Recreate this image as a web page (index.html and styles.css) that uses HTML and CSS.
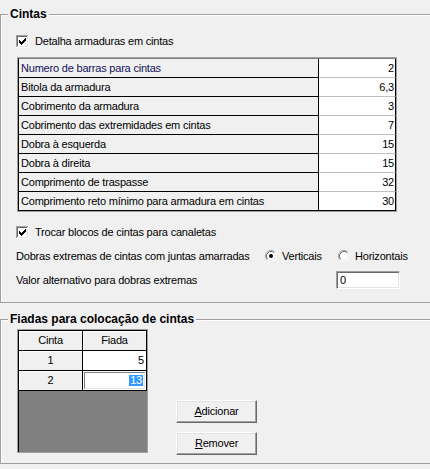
FILE: index.html
```html
<!DOCTYPE html>
<html lang="pt">
<head>
<meta charset="utf-8">
<title>Cintas</title>
<link rel="stylesheet" href="styles.css">
</head>
<body>
<div class="window">
  <fieldset class="group group-cintas">
    <legend>Cintas</legend>
    <div class="group-body cintas-body">
      <label class="check check-1">
        <svg class="cb" width="13" height="13" viewBox="0 0 13 13" shape-rendering="crispEdges">
          <rect x="0" y="0" width="13" height="13" fill="#fff"/>
          <path d="M0 0h12v1H1v11H0z" fill="#a0a0a0"/>
          <path d="M1 1h10v1H2v9H1z" fill="#696969"/>
          <path d="M12 0h1v13H0v-1h12z" fill="#fff"/>
          <path d="M11 1h1v11H1v-1h10z" fill="#e3e3e3"/>
          <path d="M3 5h1v3H3z M4 6h1v3H4z M5 7h1v3H5z M6 6h1v3H6z M7 5h1v3H7z M8 4h1v3H8z M9 3h1v3H9z" fill="#000"/>
        </svg>
        <span>Detalha armaduras em cintas</span>
      </label>

      <div class="grid">
        <div class="grid-inner">
          <div class="cell lbl first">Numero de barras para cintas</div><div class="cell val">2</div>
          <div class="cell lbl">Bitola da armadura</div><div class="cell val">6,3</div>
          <div class="cell lbl">Cobrimento da armadura</div><div class="cell val">3</div>
          <div class="cell lbl">Cobrimento das extremidades em cintas</div><div class="cell val">7</div>
          <div class="cell lbl">Dobra à esquerda</div><div class="cell val">15</div>
          <div class="cell lbl">Dobra à direita</div><div class="cell val">15</div>
          <div class="cell lbl">Comprimento de traspasse</div><div class="cell val">32</div>
          <div class="cell lbl">Comprimento reto mínimo para armadura em cintas</div><div class="cell val last">30</div>
        </div>
      </div>

      <label class="check check-2">
        <svg class="cb" width="13" height="13" viewBox="0 0 13 13" shape-rendering="crispEdges">
          <rect x="0" y="0" width="13" height="13" fill="#fff"/>
          <path d="M0 0h12v1H1v11H0z" fill="#a0a0a0"/>
          <path d="M1 1h10v1H2v9H1z" fill="#696969"/>
          <path d="M12 0h1v13H0v-1h12z" fill="#fff"/>
          <path d="M11 1h1v11H1v-1h10z" fill="#e3e3e3"/>
          <path d="M3 5h1v3H3z M4 6h1v3H4z M5 7h1v3H5z M6 6h1v3H6z M7 5h1v3H7z M8 4h1v3H8z M9 3h1v3H9z" fill="#000"/>
        </svg>
        <span>Trocar blocos de cintas para canaletas</span>
      </label>

      <div class="row row-dobras">
        <span class="row-label dobras-label">Dobras extremas de cintas com juntas amarradas</span>
        <span class="radio-opt">
          <svg class="rb" width="12" height="12" viewBox="0 0 12 12">
            <circle cx="6" cy="6" r="5.5" fill="#fff"/>
            <path d="M2.11 9.89A5.5 5.5 0 0 1 9.89 2.11" fill="none" stroke="#a0a0a0" stroke-width="1"/>
            <path d="M9.89 2.11A5.5 5.5 0 0 1 2.11 9.89" fill="none" stroke="#fff" stroke-width="1"/>
            <path d="M2.82 9.18A4.5 4.5 0 0 1 9.18 2.82" fill="none" stroke="#696969" stroke-width="1"/>
            <path d="M9.18 2.82A4.5 4.5 0 0 1 2.82 9.18" fill="none" stroke="#e3e3e3" stroke-width="1"/>
            <circle cx="6" cy="6" r="2" fill="#000"/>
          </svg>
          <span>Verticais</span>
        </span>
        <span class="radio-opt">
          <svg class="rb" width="12" height="12" viewBox="0 0 12 12">
            <circle cx="6" cy="6" r="5.5" fill="#fff"/>
            <path d="M2.11 9.89A5.5 5.5 0 0 1 9.89 2.11" fill="none" stroke="#a0a0a0" stroke-width="1"/>
            <path d="M9.89 2.11A5.5 5.5 0 0 1 2.11 9.89" fill="none" stroke="#fff" stroke-width="1"/>
            <path d="M2.82 9.18A4.5 4.5 0 0 1 9.18 2.82" fill="none" stroke="#696969" stroke-width="1"/>
            <path d="M9.18 2.82A4.5 4.5 0 0 1 2.82 9.18" fill="none" stroke="#e3e3e3" stroke-width="1"/>
          </svg>
          <span>Horizontais</span>
        </span>
      </div>

      <div class="row row-valor">
        <span class="row-label valor-label">Valor alternativo para dobras extremas</span>
        <div class="edit">0</div>
      </div>
    </div>
  </fieldset>

  <fieldset class="group group-fiadas">
    <legend>Fiadas para colocação de cintas</legend>
    <div class="group-body fiadas-body">
      <div class="sgrid">
        <div class="sgrid-inner">
          <div class="fx">Cinta</div><div class="fx">Fiada</div>
          <div class="fx">1</div><div class="dc">5</div>
          <div class="fx">2</div><div class="dc edit-cell"><span class="inplace"><span class="sel">13</span></span></div>
        </div>
      </div>
      <div class="buttons">
        <button class="btn" type="button"><u>A</u>dicionar</button>
        <button class="btn" type="button"><u>R</u>emover</button>
      </div>
    </div>
  </fieldset>
</div>
</body>
</html>
```

FILE: styles.css
```css
* { box-sizing: border-box; }

html, body {
  margin: 0;
  padding: 0;
}

body {
  width: 430px;
  height: 469px;
  overflow: hidden;
  background: #f0f0f0;
  color: #000;
  font-family: "Liberation Sans", Arial, sans-serif;
  font-size: 11px;
  letter-spacing: -0.2px;
}

.window {
  width: 430px;
}

/* Group boxes */
.group {
  width: 440px;
  min-width: 0;
  margin: 0;
  padding: 0;
  border: 1px solid #a0a0a0;
  box-shadow: inset 1px 1px 0 #fff;
}

.group legend {
  margin-left: 7px;
  padding: 0 2px;
  height: 15px;
  font-size: 12px;
  font-weight: bold;
  line-height: 15px;
  letter-spacing: 0;
  background: #f0f0f0;
}

.group-cintas { margin-top: 7px; }
.group-fiadas { margin-top: 9px; }

.cintas-body {
  display: flex;
  flex-direction: column;
  align-items: flex-start;
  padding: 0 0 13px 15px;
}

/* Checkbox rows */
.check {
  display: flex;
  align-items: center;
  gap: 6px;
  height: 17px;
  line-height: 17px;
  white-space: nowrap;
}
.check-1 { margin-top: 11px; }
.check-2 { margin-top: 12px; }
.cb { display: block; flex: none; }

/* Properties grid */
.grid {
  margin-top: 7px;
  margin-left: 1px;
  width: 380px;
  border: 1px solid #a0a0a0;
}

.grid-inner {
  display: grid;
  grid-template-columns: 300px 77px;
  border-top: 1px solid #808080;
  border-left: 1px solid #000;
}

.cell {
  height: 19px;
  line-height: 18px;
  white-space: nowrap;
  overflow: hidden;
}

.lbl {
  background: #f0f0f0;
  padding-left: 2px;
  border-right: 1px solid #000;
  border-bottom: 1px solid #000;
}
.lbl.first { color: #10105a; }

.val {
  background: #fff;
  text-align: right;
  padding-right: 1px;
  border-right: 1px solid #000;
  border-bottom: 1px solid #c0c0c0;
}
.val.last { border-bottom-color: #000; }

/* Plain rows */
.row {
  display: flex;
  align-items: center;
  white-space: nowrap;
}
.row-dobras { margin-top: 6px; height: 17px; }
.row-valor { margin-top: 7px; height: 18px; }

.dobras-label { width: 249px; flex: none; }
.valor-label { width: 320px; flex: none; }

.radio-opt {
  display: flex;
  align-items: center;
  gap: 5px;
  width: 73px;
  flex: none;
}
.rb { display: block; flex: none; margin-top: 1px; }

.edit {
  width: 64px;
  height: 18px;
  line-height: 14px;
  background: #fff;
  border-style: solid;
  border-width: 1px;
  border-color: #a0a0a0 #fff #fff #a0a0a0;
  box-shadow: inset 1px 1px 0 #696969, inset -1px -1px 0 #e3e3e3;
  padding-top: 1px;
  padding-left: 3px;
}

/* Fiadas group */
.fiadas-body {
  display: flex;
  align-items: flex-start;
  padding: 2px 0 8px 16px;
}

.sgrid {
  width: 131px;
  height: 124px;
  border: 1px solid #a0a0a0;
  background: #808080;
  padding: 1px 0 0 1px;
  box-shadow: inset 1px 1px 0 #000;
}

.sgrid-inner {
  display: grid;
  grid-template-columns: 64px 64px;
}

.fx, .dc {
  height: 20px;
  line-height: 19px;
  border-right: 1px solid #000;
  border-bottom: 1px solid #000;
  white-space: nowrap;
}

.fx {
  background: #f0f0f0;
  text-align: center;
  box-shadow: inset 1px 1px 0 #fff;
}

.dc {
  background: #fff;
  text-align: right;
  padding-right: 2px;
}

.edit-cell {
  padding: 1px;
  line-height: 15px;
}

.inplace {
  display: block;
  height: 17px;
  text-align: right;
  padding: 2px 1px 0 0;
  border-style: solid;
  border-width: 1px;
  border-color: #808080 #e3e3e3 #e3e3e3 #808080;
  background: #fff;
  line-height: 11px;
}

.sel {
  display: inline-block;
  height: 11px;
  line-height: 11px;
  padding: 0 1px;
  background: #3399ff;
  color: #fff;
}

/* Buttons */
.buttons {
  display: flex;
  flex-direction: column;
  gap: 9px;
  margin-left: 28px;
  margin-top: 71px;
}

.btn {
  width: 81px;
  height: 23px;
  padding: 0;
  margin: 0;
  font: inherit;
  letter-spacing: inherit;
  color: #000;
  background: #f0f0f0;
  border-style: solid;
  border-width: 1px;
  border-color: #fff #696969 #696969 #fff;
  box-shadow: inset -1px -1px 0 #a0a0a0, inset 1px 1px 0 #e3e3e3;
  line-height: 19px;
  text-align: center;
}

.btn u { text-decoration: underline; }
```
